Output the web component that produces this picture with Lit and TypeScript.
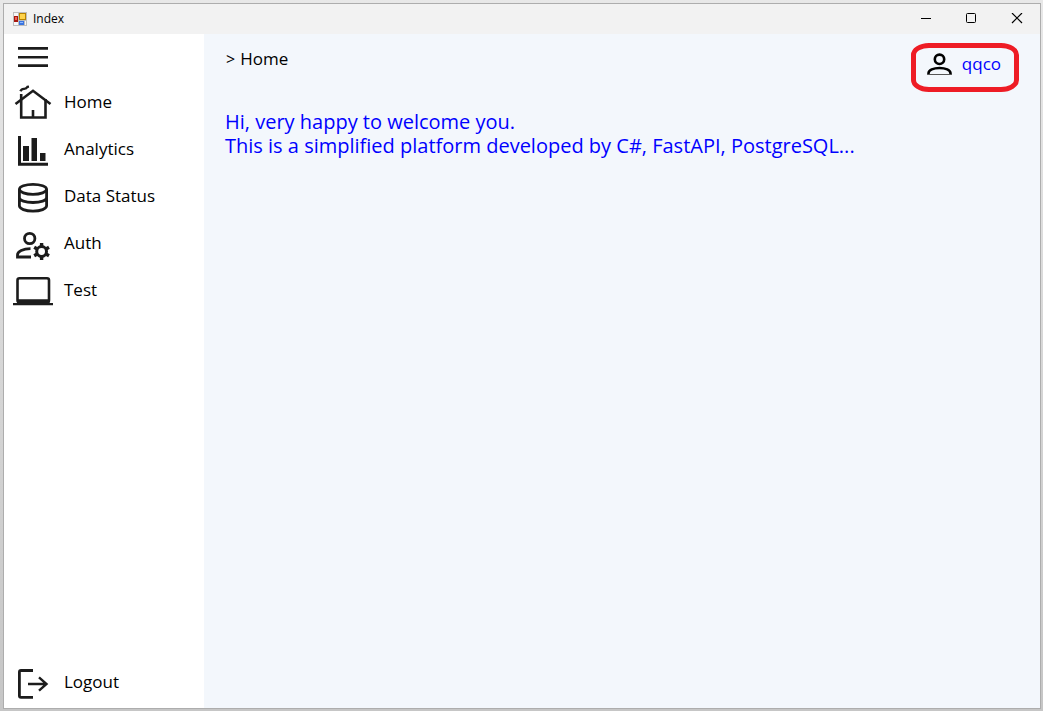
import { LitElement, html, svg, css } from "lit";
import { customElement, property, state } from "lit/decorators.js";

const icons: Record<string, unknown> = {
  home: svg`<g fill="none" stroke="#1c1c1c" stroke-width="2.6"><path d="M2.500 25 20 11.800 37.500 25"/><path d="M8.200 15V38.500H32.500V20M20 31v7"/><path d="M7.400 12.200Q8.500 9.700 11 9.800T14.500 7.800L16 7.600" stroke-width="2.300"/></g>`,
  analytics: svg`<path d="M6.500 10V38.300H35" fill="none" stroke="#1c1c1c" stroke-width="3"/><path d="M10 20h6v15h-6zM18.500 12h5.500v23h-5.500zM27 27h5.500v8H27z" fill="#1c1c1c"/>`,
  data: svg`<g fill="none" stroke="#1c1c1c" stroke-width="2.800"><ellipse cx="20" cy="16.300" rx="13.600" ry="5"/><path d="M6.400 16.300v16.500c0 3 6 5.300 13.600 5.300s13.600-2.300 13.600-5.300V16.300M6.400 24.500c0 3 6 5 13.600 5s13.600-2 13.600-5"/></g>`,
  auth: svg`<g fill="none" stroke="#1c1c1c" stroke-width="2.800"><circle cx="16.700" cy="18.500" r="5.200"/><path d="M17.500 28.700C10 28.700 4.500 31.500 4.500 35v2H18"/><circle cx="28.600" cy="31.500" r="4.900" stroke-width="3"/><path d="M28.600 26.500v-3.500M28.600 36.500v3.500M33 29l3-1.700M33 34l3 1.700M24.200 29l-3-1.700M24.200 34l-3 1.700" stroke-width="3.400"/></g>`,
  test: svg`<rect x="4.500" y="11.200" width="31.500" height="24" rx="2" fill="none" stroke="#1c1c1c" stroke-width="2.600"/><path d="M4 32.200h32.500V36H4zM0 36h40v2.200H0z" fill="#1c1c1c"/>`,
  logout: svg`<g fill="none" stroke="#1c1c1c" stroke-width="2.800"><path d="M20 11.500H8q-1.600 0-1.600 1.600V36.800q0 1.600 1.600 1.600H20"/><path d="M15 25h18M26 18.300l7.500 6.700-7.500 6.700" stroke-width="2.400"/></g>`,
};

@customElement("nav-item")
class NavItem extends LitElement {
  @property() icon = "";
  @property() label = "";
  static styles = css`
    :host { display: block; }
    .item {
      display: flex;
      align-items: center;
      gap: 11px;
      width: 100%;
      height: 47px;
      padding: 0 9px;
      box-sizing: border-box;
      color: #000;
      font-size: 17px;
      line-height: 24px;
      text-decoration: none;
    }
    .icon { width: 40px; height: 47px; flex: none; }
    .label { padding-bottom: 2px; }
  `;
  render() {
    return html`<a class="item" href="#"><svg class="icon" viewBox="0 0 40 47" aria-hidden="true">${icons[this.icon]}</svg><span class="label">${this.label}</span></a>`;
  }
}

@customElement("app-root")
class AppRoot extends LitElement {
  @state() private page = "Home";

  static styles = css`
    :host {
      display: flex;
      box-sizing: border-box;
      height: 100vh;
      padding: 3px 2px 2px 3px;
      background: linear-gradient(#e8e8e8, #c6c6c6);
      font-family: "Open Sans", "Noto Sans", sans-serif;
      color: #000;
    }
    .window {
      flex: 1;
      display: flex;
      flex-direction: column;
      border: 1px solid #adadad;
      background: #f3f7fc;
    }
    .titlebar {
      display: flex;
      align-items: center;
      gap: 6px;
      height: 30px;
      padding-left: 9px;
      background: #f2f2f2;
    }
    .app-icon { width: 14px; height: 14px; }
    .title { flex: 1; font-size: 12px; line-height: 16px; }
    .controls { display: flex; }
    button {
      padding: 0;
      border: 0;
      background: none;
      font: inherit;
      color: inherit;
      display: flex;
      align-items: center;
    }
    .control { width: 46px; height: 30px; justify-content: center; }
    .control svg { width: 12px; height: 12px; }
    .body { flex: 1; display: flex; min-height: 0; }
    .sidebar {
      display: flex;
      flex-direction: column;
      flex: none;
      width: 200px;
      background: #fff;
    }
    .menu { height: 45px; padding-left: 14px; }
    .menu svg { width: 30px; height: 20px; }
    .bottom { margin-top: auto; padding-bottom: 2px; }
    .main { flex: 1; min-width: 0; }
    .header {
      display: flex;
      align-items: flex-start;
      justify-content: space-between;
      padding: 9px 21px 0 22px;
    }
    .crumbs { display: flex; gap: 5px; padding-top: 4px; font-size: 17px; line-height: 24px; }
    .arrow { font-size: 16px; }
    .user {
      display: flex;
      align-items: center;
      gap: 10px;
      height: 49px;
      box-sizing: border-box;
      padding: 0 13px 6px 11px;
      border: 5px solid #ee1c25;
      border-radius: 18px / 12px;
      color: #00f;
      font-size: 17px;
      line-height: 24px;
    }
    .user svg { width: 25px; height: 24px; }
    .user span { padding-bottom: 2px; }
    .welcome {
      margin: 18px 21px 0;
      color: #00f;
      font-size: 20px;
      line-height: 24px;
    }
    .welcome p { margin: 0; }
  `;

  render() {
    return html`
      <div class="window">
        <header class="titlebar">
          <svg class="app-icon" viewBox="0 0 14 14" aria-hidden="true">
            <path d="M0 0h14v14H0z" fill="#bdbdbd"/>
            <path d="M1 1h4v3H1zM1 10h4v3H1zM12 9h1v4h-1z" fill="#f7f7f7"/>
            <path d="M1 4h4v6H1z" fill="#a8170f"/><path d="M2 5h2v3H2z" fill="#ef6253"/>
            <path d="M6 1h7v7H6z" fill="#b88300"/><path d="M7 2h5v5H7z" fill="#ffd34a"/>
            <path d="M6 9h5v4H6z" fill="#3a74e0"/><path d="M7 10h3v1H7z" fill="#8fb9ff"/>
          </svg>
          <span class="title">Index</span>
          <div class="controls">
            <button class="control" aria-label="Minimize"><svg viewBox="0 0 12 12"><path d="M2 5.500h10" stroke="#000"/></svg></button>
            <button class="control" aria-label="Maximize"><svg viewBox="0 0 12 12"><rect x="1.500" y="0.500" width="9" height="9" rx="1" fill="none" stroke="#000"/></svg></button>
            <button class="control" aria-label="Close"><svg viewBox="0 0 12 12"><path d="M1 0l10 10M11 0 1 10" stroke="#000" stroke-width="1.200"/></svg></button>
          </div>
        </header>
        <div class="body">
          <nav class="sidebar">
            <button class="menu" aria-label="Menu">
              <svg viewBox="0 0 30 20"><path d="M0 0h30v2.800H0zM0 9h30v2.400H0zM0 17.200h30V20H0z" fill="#1c1c1c"/></svg>
            </button>
            <nav-item icon="home" label="Home"></nav-item>
            <nav-item icon="analytics" label="Analytics"></nav-item>
            <nav-item icon="data" label="Data Status"></nav-item>
            <nav-item icon="auth" label="Auth"></nav-item>
            <nav-item icon="test" label="Test"></nav-item>
            <nav-item class="bottom" icon="logout" label="Logout"></nav-item>
          </nav>
          <main class="main">
            <div class="header">
              <div class="crumbs"><span class="arrow">&gt;</span><span>${this.page}</span></div>
              <button class="user">
                <svg viewBox="0 0 25 24" aria-hidden="true"><g fill="none" stroke="#000" stroke-width="2.600"><circle cx="12.500" cy="6.300" r="4.700"/><path d="M1.500 21.700v-1.500C1.500 17 6.500 15 12.500 15s11 2 11 5.200v1.500"/></g><path d="M1 21.500h23.500" stroke="#555" stroke-width="1"/></svg>
                <span>qqco</span>
              </button>
            </div>
            <div class="welcome">
              <p>Hi, very happy to welcome you.</p>
              <p>This is a simplified platform developed by C#, FastAPI, PostgreSQL...</p>
            </div>
          </main>
        </div>
      </div>
    `;
  }
}
